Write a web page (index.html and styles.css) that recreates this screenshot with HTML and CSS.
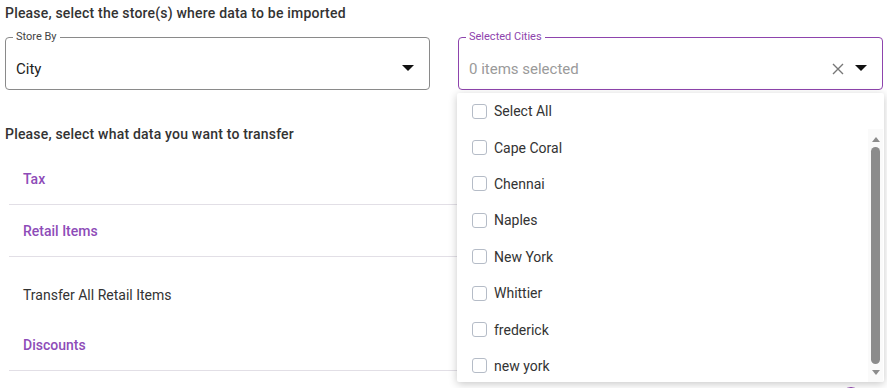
FILE: index.html
```html
<!DOCTYPE html>
<html lang="en">
<head>
    <meta charset="UTF-8">
    <meta name="viewport" content="width=device-width, initial-scale=1.0">
    <title>Data Import</title>
    <link rel="stylesheet" href="styles.css">
</head>
<body>
    <div class="page">
        <h2 class="section-title">Please, select the store(s) where data to be imported</h2>
        <div class="fields">
            <fieldset class="field">
                <legend>Store By</legend>
                <div class="field-row">
                    <span class="value">City</span>
                    <span class="caret"></span>
                </div>
            </fieldset>
            <div class="multi">
                <fieldset class="field active">
                    <legend>Selected Cities</legend>
                    <div class="field-row">
                        <span class="value placeholder">0 items selected</span>
                        <svg class="clear" width="12" height="12" viewBox="0 0 12 12"><path d="M1 1L11 11M11 1L1 11" stroke="#777" stroke-width="1.4"/></svg>
                        <span class="caret"></span>
                    </div>
                </fieldset>
                <div class="dropdown">
                    <label class="option"><span class="box"></span>Select All</label>
                    <div class="options-wrap">
                        <div class="options">
                            <label class="option"><span class="box"></span>Cape Coral</label>
                            <label class="option"><span class="box"></span>Chennai</label>
                            <label class="option"><span class="box"></span>Naples</label>
                            <label class="option"><span class="box"></span>New York</label>
                            <label class="option"><span class="box"></span>Whittier</label>
                            <label class="option"><span class="box"></span>frederick</label>
                            <label class="option"><span class="box"></span>new york</label>
                        </div>
                        <!-- scrollbar drawn by hand, headless hides the native one -->
                        <div class="scrollbar">
                            <span class="arrow up"></span>
                            <span class="thumb"></span>
                            <span class="arrow down"></span>
                        </div>
                    </div>
                </div>
            </div>
        </div>

        <h2 class="section-title second">Please, select what data you want to transfer</h2>
        <div class="accordion">
            <div class="acc-item">
                <div class="acc-head">Tax<span class="acc-icon"></span></div>
            </div>
            <div class="acc-item">
                <div class="acc-head">Retail Items<span class="acc-icon"></span></div>
                <div class="acc-body">Transfer All Retail Items</div>
            </div>
            <div class="acc-item">
                <div class="acc-head">Discounts<span class="acc-icon"></span></div>
            </div>
            <div class="acc-item">
                <div class="acc-head"><span></span><span class="acc-icon"></span></div>
            </div>
        </div>
    </div>
</body>
</html>
```

FILE: styles.css
```css
body {
    margin: 0;
    font-family: Roboto, "Liberation Sans", sans-serif;
    color: #333;
    background: #fff;
    overflow: hidden;
}
.page {
    padding: 3px 4px 0 5px;
}
.section-title {
    margin: 0;
    font-size: 14px;
    font-weight: 500;
    line-height: 20px;
    letter-spacing: 0.2px;
    color: #333;
}
.section-title.second {
    margin-top: 34px;
}
.fields {
    display: grid;
    grid-template-columns: 425px 425px;
    column-gap: 28px;
    margin-top: 8px;
}
.field {
    margin: 0;
    padding: 0 10px;
    border: 1px solid #8a8a8a;
    border-radius: 4px;
    min-width: 0;
}
.field legend {
    font-size: 11px;
    line-height: 12px;
    padding: 0 3px;
    margin-left: -3px;
    color: #444;
}
.field.active {
    border-color: #8e44ad;
}
.field.active legend {
    color: #8e44ad;
}
.field-row {
    display: flex;
    align-items: center;
    height: 40px;
    padding-top: 6px;
}
.value {
    flex: 1;
    font-size: 15px;
    color: #222;
}
.value.placeholder {
    color: #9a9a9a;
}
.caret {
    width: 0;
    height: 0;
    border-left: 6px solid transparent;
    border-right: 6px solid transparent;
    border-top: 6px solid #111;
    margin-right: 5px;
    margin-top: -2px;
}
.clear {
    margin-right: 11px;
}
.multi {
    position: relative;
}
.dropdown {
    position: absolute;
    top: 62px;
    left: -1px;
    right: -1px;
    height: 289px;
    background: #fff;
    box-shadow: 0 2px 8px rgba(0, 0, 0, 0.22);
    border-radius: 2px;
    display: flex;
    flex-direction: column;
    z-index: 2;
}
.options-wrap {
    flex: 1;
    display: flex;
    min-height: 0;
}
.options {
    flex: 1;
    overflow: hidden;
}
.option {
    display: flex;
    align-items: center;
    height: 36.4px;
    padding-left: 15px;
    font-size: 14px;
    color: #333;
    flex-shrink: 0;
}
.box {
    width: 13px;
    height: 13px;
    border: 1px solid #b5bcc7;
    border-radius: 3px;
    margin-right: 7px;
}
.scrollbar {
    width: 15px;
    margin-right: 1px;
    background: #fafafa;
    display: flex;
    flex-direction: column;
    align-items: center;
    padding: 8px 0 7px;
}
.arrow {
    width: 0;
    height: 0;
    border-left: 4px solid transparent;
    border-right: 4px solid transparent;
}
.arrow.up {
    border-bottom: 5px solid #8c8c8c;
}
.arrow.down {
    border-top: 5px solid #8c8c8c;
}
.thumb {
    flex: 1;
    width: 9px;
    margin: 5px 0 6px;
    background: #8c8c8c;
    border-radius: 5px;
}
.accordion {
    margin: 9px 0 0 4px;
}
.acc-item {
    border-bottom: 1px solid #e2dfe6;
}
.acc-item:nth-child(2) {
    border-bottom: none;
}
.acc-head {
    display: flex;
    align-items: center;
    justify-content: space-between;
    height: 51px;
    padding: 0 22px 0 14px;
    font-size: 14px;
    font-weight: 500;
    color: #8e4cb8;
}
.acc-item:nth-child(2) .acc-head {
    border-bottom: 1px solid #e2dfe6;
}
.acc-icon {
    width: 16px;
    height: 16px;
    border: 2px solid #8e44ad;
    border-radius: 50%;
}
.acc-body {
    padding: 28px 14px 14px;
    font-size: 14px;
    line-height: 20px;
    color: #333;
}
```
